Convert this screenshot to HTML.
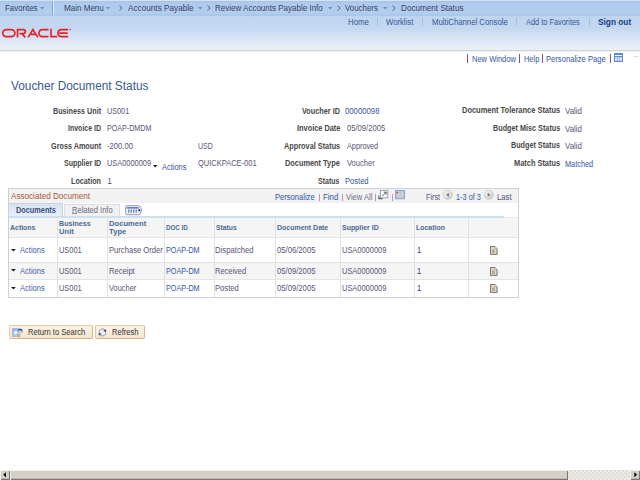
<!DOCTYPE html>
<html><head><meta charset="utf-8"><style>
html,body{margin:0;padding:0;width:640px;height:480px;overflow:hidden;background:#fff}
.t{position:absolute;white-space:nowrap;font-family:"Liberation Sans",sans-serif}
.r{position:absolute;display:block}
</style></head><body>
<div class="r" style="left:0px;top:0px;width:640px;height:16px;background:linear-gradient(#d3e2f4 0,#d3e2f4 1px,#a6c2e7 1px,#afcaec 3px,#b3cdee 13px,#abc7eb 15px,#abc7eb 16px)"></div>
<div class="r" style="left:0px;top:16px;width:640px;height:34px;background:linear-gradient(#bfd5ee 0%,#c4d8f0 38%,#cfdff2 52%,#dae6f5 70%,#e3ecf7 85%,#ebf1f9 100%)"></div>
<div class="r" style="left:0px;top:50px;width:640px;height:1px;background:#d2d6dc"></div>
<div class="r" style="left:0px;top:51px;width:640px;height:1px;background:#f0f1f3"></div>
<div class="r" style="left:52px;top:1px;width:1px;height:14px;background:#80a4d4"></div>
<div class="r" style="left:53px;top:1px;width:1px;height:14px;background:#e6f0fb"></div>
<svg class="r" style="left:39.75px;top:7.2px" width="5.5" height="3.6"><path d="M0 0H4.5L2.25 2.6Z" fill="#7090c0"/></svg>
<svg class="r" style="left:105.6px;top:7.2px" width="5.5" height="3.6"><path d="M0 0H4.5L2.25 2.6Z" fill="#7090c0"/></svg>
<svg class="r" style="left:197.6px;top:7.2px" width="5.5" height="3.6"><path d="M0 0H4.5L2.25 2.6Z" fill="#7090c0"/></svg>
<svg class="r" style="left:327.75px;top:7.2px" width="5.5" height="3.6"><path d="M0 0H4.5L2.25 2.6Z" fill="#7090c0"/></svg>
<svg class="r" style="left:383.4px;top:7.2px" width="5.5" height="3.6"><path d="M0 0H4.5L2.25 2.6Z" fill="#7090c0"/></svg>
<svg class="r" style="left:118.5px;top:5.4px" width="5" height="7"><path d="M0.6 0.6L3 3.1L0.6 5.6" stroke="#45587a" fill="none" stroke-width="0.95"/></svg>
<svg class="r" style="left:206.8px;top:5.4px" width="5" height="7"><path d="M0.6 0.6L3 3.1L0.6 5.6" stroke="#45587a" fill="none" stroke-width="0.95"/></svg>
<svg class="r" style="left:336.8px;top:5.4px" width="5" height="7"><path d="M0.6 0.6L3 3.1L0.6 5.6" stroke="#45587a" fill="none" stroke-width="0.95"/></svg>
<svg class="r" style="left:392px;top:5.4px" width="5" height="7"><path d="M0.6 0.6L3 3.1L0.6 5.6" stroke="#45587a" fill="none" stroke-width="0.95"/></svg>
<div class="r" style="left:377px;top:18px;width:1px;height:8px;background:#a9bedb"></div>
<div class="r" style="left:422px;top:18px;width:1px;height:8px;background:#a9bedb"></div>
<div class="r" style="left:516px;top:18px;width:1px;height:8px;background:#a9bedb"></div>
<div class="r" style="left:589px;top:18px;width:1px;height:8px;background:#a9bedb"></div>
<svg class="r" style="left:0;top:26px" width="76" height="14" viewBox="0 26 76 14"><g fill="none" stroke="#e8202a" stroke-width="1.7">
<rect x="2.75" y="29.65" width="12.1" height="6.9" rx="3.45"/>
<path d="M17.55 37.4V29.65H23.4A1.95 1.95 0 0 1 23.4 33.55H19.5M21.9 33.6L25.2 37.4"/>
<path d="M28.1 37.4L32.9 29.5L37.9 37.4M30.9 34.3H36.2"/>
<path d="M48.6 29.65H42.35A3.45 3.45 0 0 0 42.35 36.55H48.6"/>
<path d="M51.05 28.8V36.55H57.1"/>
<path d="M68.1 29.65H61.35A3.45 3.45 0 0 0 61.35 36.55H68.1M59.2 33.05H67.7"/>
</g><circle cx="70.3" cy="29.5" r="0.7" fill="#e8202a"/></svg>
<div class="r" style="left:467px;top:54px;width:1px;height:9px;background:#8a4aa8"></div>
<div class="r" style="left:519px;top:54px;width:1px;height:9px;background:#8a4aa8"></div>
<div class="r" style="left:542px;top:54px;width:1px;height:9px;background:#8a4aa8"></div>
<div class="r" style="left:610px;top:54px;width:1px;height:9px;background:#8a4aa8"></div>
<svg class="r" style="left:614px;top:53px" width="9" height="9"><rect x="0" y="0" width="9" height="9" fill="#5d8ccf"/><rect x="1" y="2" width="7" height="1" fill="#f4f8ff"/><rect x="1" y="4" width="7" height="4" fill="#c9dbf3"/><path d="M1 6H8" stroke="#e8f0fb" stroke-width="0.8"/><path d="M3.5 4V8M5.5 4V8" stroke="#8eb0e2" stroke-width="0.8"/></svg>
<div class="r" style="left:634px;top:56px;width:5px;height:1px;background:#e2e2e2"></div>
<div class="r" style="left:634px;top:57px;width:1px;height:1px;background:#ececec"></div>
<div class="r" style="left:8px;top:188px;width:511px;height:110px;background:#fff;border:1px solid #cbd0d9;box-sizing:border-box"></div>
<div class="r" style="left:9px;top:189px;width:509px;height:14px;background:#f2f2f2"></div>
<div class="r" style="left:319px;top:194px;width:1px;height:7px;background:#cc90a8"></div>
<div class="r" style="left:342px;top:194px;width:1px;height:7px;background:#cc90a8"></div>
<div class="r" style="left:375px;top:194px;width:1px;height:7px;background:#cc90a8"></div>
<div class="r" style="left:392px;top:194px;width:1px;height:7px;background:#cc90a8"></div>
<svg class="r" style="left:378px;top:190px" width="11" height="10"><path d="M0.9 5.6V8.6H4.6" fill="none" stroke="#5a5a5a" stroke-width="1.1"/><rect x="2.4" y="0.6" width="7.4" height="7.2" fill="#fff" stroke="#8c9cb6" stroke-width="0.9"/><path d="M4.4 6L7.9 2.4M5.7 2.2H8.1V4.6" stroke="#505050" stroke-width="0.9" fill="none"/></svg>
<svg class="r" style="left:395.2px;top:190px" width="10" height="9.5"><rect x="0.5" y="0.5" width="9" height="8.3" fill="#c3c7cc" stroke="#78a0d6" stroke-width="0.9"/><path d="M1 4.6H9M4 1V8.5M6.8 1V8.5" stroke="#d2d6da" stroke-width="0.6"/><circle cx="2.2" cy="2.5" r="0.8" fill="#f01818"/></svg>
<svg class="r" style="left:443.3px;top:189.6px" width="10" height="10"><defs><linearGradient id="g443" x1="0" y1="0" x2="1" y2="1"><stop offset="0" stop-color="#ffffff"/><stop offset="1" stop-color="#c4c4c4"/></linearGradient></defs><circle cx="4.8" cy="4.8" r="4.5" fill="url(#g443)" stroke="#bdbdbd" stroke-width="0.7"/><path d="M5.9 2.7L3.2 4.8L5.9 6.9Z" fill="#7a7a7a"/></svg>
<svg class="r" style="left:484.2px;top:189.6px" width="10" height="10"><defs><linearGradient id="g484" x1="0" y1="0" x2="1" y2="1"><stop offset="0" stop-color="#ffffff"/><stop offset="1" stop-color="#c4c4c4"/></linearGradient></defs><circle cx="4.8" cy="4.8" r="4.5" fill="url(#g484)" stroke="#bdbdbd" stroke-width="0.7"/><path d="M3.7 2.7L6.4 4.8L3.7 6.9Z" fill="#7a7a7a"/></svg>
<div class="r" style="left:9px;top:203px;width:509px;height:13px;background:#fff"></div>
<div class="r" style="left:9px;top:203px;width:54px;height:14px;background:linear-gradient(#d8e3f1,#e9eff8);border-right:1px solid #c8d4e4;border-top:1px solid #c9d3e2;box-sizing:border-box"></div>
<div class="r" style="left:64px;top:204px;width:56px;height:12px;background:#f1f1f1;border:1px solid #d9dde4;border-bottom:none;box-sizing:border-box"></div>
<svg class="r" style="left:125px;top:204.5px" width="18" height="11"><path d="M1.6 0.7H13.6Q15.2 0.7 16.1 3.4L16.7 5.2L16.1 7Q15.2 9.7 13.6 9.7H1.6Q0.7 9.7 0.7 8.8V1.6Q0.7 0.7 1.6 0.7Z" fill="#f0f4fb" stroke="#858da0" stroke-width="0.9"/><rect x="1.8" y="2.1" width="11.8" height="1.5" fill="#5674c0"/><rect x="3.0" y="4.7" width="1.5" height="1" fill="#2f4f9c"/><rect x="5.5" y="4.7" width="1.5" height="1" fill="#2f4f9c"/><rect x="8.0" y="4.7" width="1.5" height="1" fill="#2f4f9c"/><rect x="10.5" y="4.7" width="1.5" height="1" fill="#2f4f9c"/><rect x="3.0" y="6.5" width="1.5" height="1" fill="#2f4f9c"/><rect x="5.5" y="6.5" width="1.5" height="1" fill="#2f4f9c"/><rect x="8.0" y="6.5" width="1.5" height="1" fill="#2f4f9c"/><rect x="10.5" y="6.5" width="1.5" height="1" fill="#2f4f9c"/><path d="M13.5 3.5L15.9 5.25L13.5 7Z" fill="#1c3a88"/></svg>
<div class="r" style="left:9px;top:216px;width:495px;height:2px;background:#cde0ef"></div>
<div class="r" style="left:504px;top:217px;width:14px;height:1px;background:#e6e6e6"></div>
<div class="r" style="left:9px;top:218px;width:509px;height:19px;background:#f5f5f5"></div>
<div class="r" style="left:9px;top:237px;width:509px;height:1px;background:#e6e6e6"></div>
<div class="r" style="left:57px;top:218px;width:1px;height:79px;background:#e2e2e2"></div>
<div class="r" style="left:107px;top:218px;width:1px;height:79px;background:#e2e2e2"></div>
<div class="r" style="left:164px;top:218px;width:1px;height:79px;background:#e2e2e2"></div>
<div class="r" style="left:214px;top:218px;width:1px;height:79px;background:#e2e2e2"></div>
<div class="r" style="left:275px;top:218px;width:1px;height:79px;background:#e2e2e2"></div>
<div class="r" style="left:340px;top:218px;width:1px;height:79px;background:#e2e2e2"></div>
<div class="r" style="left:414px;top:218px;width:1px;height:79px;background:#e2e2e2"></div>
<div class="r" style="left:468px;top:218px;width:1px;height:79px;background:#e2e2e2"></div>
<div class="r" style="left:9px;top:262px;width:509px;height:1px;background:#e4e4e4"></div>
<div class="r" style="left:9px;top:263px;width:509px;height:16px;background:#f5f5f5"></div>
<div class="r" style="left:9px;top:279px;width:509px;height:1px;background:#e4e4e4"></div>
<div class="r" style="left:57px;top:263px;width:1px;height:16px;background:#e0e0e0"></div>
<div class="r" style="left:107px;top:263px;width:1px;height:16px;background:#e0e0e0"></div>
<div class="r" style="left:164px;top:263px;width:1px;height:16px;background:#e0e0e0"></div>
<div class="r" style="left:214px;top:263px;width:1px;height:16px;background:#e0e0e0"></div>
<div class="r" style="left:275px;top:263px;width:1px;height:16px;background:#e0e0e0"></div>
<div class="r" style="left:340px;top:263px;width:1px;height:16px;background:#e0e0e0"></div>
<div class="r" style="left:414px;top:263px;width:1px;height:16px;background:#e0e0e0"></div>
<div class="r" style="left:468px;top:263px;width:1px;height:16px;background:#e0e0e0"></div>
<svg class="r" style="left:489.6px;top:245.8px" width="9" height="10"><path d="M0.5 0.5H4.9L7.1 2.7V8.4H0.5Z" fill="#e4dac2" stroke="#6c665a" stroke-width="0.9"/><path d="M4.9 0.6V2.7H7" fill="#faf6ec" stroke="#8c867a" stroke-width="0.6"/><rect x="2.1" y="3.4" width="2.7" height="3.6" fill="#a29e9e" opacity="0.85"/></svg>
<svg class="r" style="left:489.6px;top:266.6px" width="9" height="10"><path d="M0.5 0.5H4.9L7.1 2.7V8.4H0.5Z" fill="#e4dac2" stroke="#6c665a" stroke-width="0.9"/><path d="M4.9 0.6V2.7H7" fill="#faf6ec" stroke="#8c867a" stroke-width="0.6"/><rect x="2.1" y="3.4" width="2.7" height="3.6" fill="#a29e9e" opacity="0.85"/></svg>
<svg class="r" style="left:489.6px;top:283.6px" width="9" height="10"><path d="M0.5 0.5H4.9L7.1 2.7V8.4H0.5Z" fill="#e4dac2" stroke="#6c665a" stroke-width="0.9"/><path d="M4.9 0.6V2.7H7" fill="#faf6ec" stroke="#8c867a" stroke-width="0.6"/><rect x="2.1" y="3.4" width="2.7" height="3.6" fill="#a29e9e" opacity="0.85"/></svg>
<svg class="r" style="left:11.3px;top:248.6px" width="6" height="3"><path d="M0 0H4.8L2.4 2.6Z" fill="#1a1a1a"/></svg>
<svg class="r" style="left:11.3px;top:269px" width="6" height="3"><path d="M0 0H4.8L2.4 2.6Z" fill="#1a1a1a"/></svg>
<svg class="r" style="left:11.3px;top:287px" width="6" height="3"><path d="M0 0H4.8L2.4 2.6Z" fill="#1a1a1a"/></svg>
<svg class="r" style="left:153.2px;top:165px" width="5" height="3"><path d="M0 0H4.4L2.2 2.5Z" fill="#1a1a1a"/></svg>
<div class="r" style="left:9px;top:325px;width:84px;height:14px;background:linear-gradient(#fcf3e6,#f6e4cc);border:1px solid #e6c89e;border-right-color:#d9b583;border-bottom-color:#d9b583;box-sizing:border-box;border-radius:2px"></div>
<div class="r" style="left:95px;top:325px;width:50px;height:14px;background:linear-gradient(#fcf3e6,#f6e4cc);border:1px solid #e6c89e;border-right-color:#d9b583;border-bottom-color:#d9b583;box-sizing:border-box;border-radius:2px"></div>
<svg class="r" style="left:12px;top:327.5px" width="12" height="10"><defs><linearGradient id="rs" x1="0" y1="0" x2="1" y2="1"><stop offset="0" stop-color="#7fb0f0"/><stop offset="1" stop-color="#cfe2fb"/></linearGradient></defs><rect x="0.4" y="0.6" width="7.6" height="8" fill="url(#rs)" stroke="#8ab4ee" stroke-width="0.7"/><circle cx="3.9" cy="4.6" r="2.2" fill="#f4f8ff" stroke="#9cb4d8" stroke-width="0.8"/><path d="M5.4 6.3L7.4 8.6" stroke="#cfa418" stroke-width="1.3"/><path d="M5.8 2.6Q7.4 0.9 9.6 1.9" stroke="#1f3f8c" stroke-width="1.1" fill="none"/><path d="M9 0.5L10.8 2.4L8.6 3.1Z" fill="#1f3f8c"/><path d="M10.2 3.2V4.6" stroke="#2a4a98" stroke-width="0.8"/></svg>
<svg class="r" style="left:98px;top:328px" width="9" height="9"><path d="M0.9 4.2A3.5 3.5 0 0 1 6.6 1.6" stroke="#7d9ed6" stroke-width="1" fill="none"/><path d="M7.9 4.4A3.5 3.5 0 0 1 2.2 7.2" stroke="#7d9ed6" stroke-width="1" fill="none"/><path d="M5.2 2.6L8.1 1.2L7.9 4.3Z" fill="#1a3c9e"/><path d="M3.6 6.1L0.7 7.6L0.9 4.6Z" fill="#1a3c9e"/></svg>
<div class="r" style="left:71.5px;top:213px;width:5px;height:1px;background:#9090a8"></div>
<div class="r" style="left:0px;top:470px;width:640px;height:10px;background-color:#eeece8;background-image:linear-gradient(45deg,#e0ddd9 25%,transparent 25%,transparent 75%,#e0ddd9 75%),linear-gradient(45deg,#e0ddd9 25%,transparent 25%,transparent 75%,#e0ddd9 75%);background-size:4px 4px;background-position:0 0,2px 2px"></div>
<div class="r" style="left:0px;top:470px;width:10px;height:10px;background:#d4d0c8;box-shadow:inset 1px 1px 0 #f2eeea,inset -1px -1px 0 #7a7674,inset -1px -2px 0 #bcb8b2"></div>
<div class="r" style="left:10px;top:470px;width:558px;height:10px;background:#d4d0c8;box-shadow:inset 1px 1px 0 #f2eeea,inset -1px -1px 0 #7a7674,inset -1px -2px 0 #bcb8b2"></div>
<div class="r" style="left:630px;top:470px;width:10px;height:10px;background:#d4d0c8;box-shadow:inset 1px 1px 0 #f2eeea,inset -1px -1px 0 #7a7674,inset -1px -2px 0 #bcb8b2"></div>
<svg class="r" style="left:3px;top:472px" width="4" height="6"><path d="M3 0.3V5.2L0.2 2.75Z" fill="#000"/></svg>
<svg class="r" style="left:634px;top:472px" width="4" height="6"><path d="M0.3 0.3V5.2L3.1 2.75Z" fill="#000"/></svg>
<div class="t" style="left:5.00px;top:4px;font-size:8.4px;line-height:8.4px;font-weight:normal;color:#37446a;transform:scaleX(0.9441);transform-origin:0 0;">Favorites</div>
<div class="t" style="left:63.75px;top:4px;font-size:8.4px;line-height:8.4px;font-weight:normal;color:#37446a;transform:scaleX(0.9610);transform-origin:0 0;">Main Menu</div>
<div class="t" style="left:127.50px;top:4px;font-size:8.4px;line-height:8.4px;font-weight:normal;color:#37446a;transform:scaleX(0.9791);transform-origin:0 0;">Accounts Payable</div>
<div class="t" style="left:215.00px;top:4px;font-size:8.4px;line-height:8.4px;font-weight:normal;color:#37446a;transform:scaleX(0.9566);transform-origin:0 0;">Review Accounts Payable Info</div>
<div class="t" style="left:345.25px;top:4px;font-size:8.4px;line-height:8.4px;font-weight:normal;color:#37446a;transform:scaleX(0.9400);transform-origin:0 0;">Vouchers</div>
<div class="t" style="left:400.75px;top:4px;font-size:8.4px;line-height:8.4px;font-weight:normal;color:#37446a;transform:scaleX(0.9727);transform-origin:0 0;">Document Status</div>
<div class="t" style="left:347.80px;top:18px;font-size:8.4px;line-height:8.4px;font-weight:normal;color:#3456a0;transform:scaleX(0.9364);transform-origin:0 0;">Home</div>
<div class="t" style="left:386.10px;top:18px;font-size:8.4px;line-height:8.4px;font-weight:normal;color:#3456a0;transform:scaleX(0.9217);transform-origin:0 0;">Worklist</div>
<div class="t" style="left:431.85px;top:18px;font-size:8.4px;line-height:8.4px;font-weight:normal;color:#3456a0;transform:scaleX(0.9244);transform-origin:0 0;">MultiChannel Console</div>
<div class="t" style="left:525.70px;top:18px;font-size:8.4px;line-height:8.4px;font-weight:normal;color:#3456a0;transform:scaleX(0.8820);transform-origin:0 0;">Add to Favorites</div>
<div class="t" style="left:597.60px;top:18px;font-size:8.6px;line-height:8.6px;font-weight:bold;color:#173a86;transform:scaleX(0.9657);transform-origin:0 0;">Sign out</div>
<div class="t" style="left:471.90px;top:55px;font-size:8.4px;line-height:8.4px;font-weight:normal;color:#3456a0;transform:scaleX(0.8980);transform-origin:0 0;">New Window</div>
<div class="t" style="left:523.50px;top:55px;font-size:8.4px;line-height:8.4px;font-weight:normal;color:#3456a0;transform:scaleX(0.8882);transform-origin:0 0;">Help</div>
<div class="t" style="left:546.10px;top:55px;font-size:8.4px;line-height:8.4px;font-weight:normal;color:#3456a0;transform:scaleX(0.9106);transform-origin:0 0;">Personalize Page</div>
<div class="t" style="left:11.00px;top:80px;font-size:12px;line-height:12px;font-weight:normal;color:#3a5a8c;transform:scaleX(0.9856);transform-origin:0 0;">Voucher Document Status</div>
<div class="t" style="left:52.80px;top:107px;font-size:8.4px;line-height:8.4px;font-weight:bold;color:#484848;transform:scaleX(0.8607);transform-origin:0 0;">Business Unit</div>
<div class="t" style="left:67.60px;top:124px;font-size:8.4px;line-height:8.4px;font-weight:bold;color:#484848;transform:scaleX(0.8350);transform-origin:0 0;">Invoice ID</div>
<div class="t" style="left:50.80px;top:142px;font-size:8.4px;line-height:8.4px;font-weight:bold;color:#484848;transform:scaleX(0.8655);transform-origin:0 0;">Gross Amount</div>
<div class="t" style="left:64.00px;top:159px;font-size:8.4px;line-height:8.4px;font-weight:bold;color:#484848;transform:scaleX(0.8409);transform-origin:0 0;">Supplier ID</div>
<div class="t" style="left:71.00px;top:177px;font-size:8.4px;line-height:8.4px;font-weight:bold;color:#484848;transform:scaleX(0.8571);transform-origin:0 0;">Location</div>
<div class="t" style="left:107.00px;top:107px;font-size:8.4px;line-height:8.4px;font-weight:normal;color:#5a5474;transform:scaleX(0.8654);transform-origin:0 0;">US001</div>
<div class="t" style="left:107.00px;top:124px;font-size:8.4px;line-height:8.4px;font-weight:normal;color:#5a5474;transform:scaleX(0.8510);transform-origin:0 0;">POAP-DMDM</div>
<div class="t" style="left:107.00px;top:142px;font-size:8.4px;line-height:8.4px;font-weight:normal;color:#5a5474;transform:scaleX(0.9107);transform-origin:0 0;">-200.00</div>
<div class="t" style="left:107.00px;top:159px;font-size:8.4px;line-height:8.4px;font-weight:normal;color:#5a5474;transform:scaleX(0.8850);transform-origin:0 0;">USA0000009</div>
<div class="t" style="left:107.20px;top:177px;font-size:8.4px;line-height:8.4px;font-weight:normal;color:#5a5474;">1</div>
<div class="t" style="left:198.10px;top:142px;font-size:8.4px;line-height:8.4px;font-weight:normal;color:#5a5474;transform:scaleX(0.8333);transform-origin:0 0;">USD</div>
<div class="t" style="left:198.10px;top:159px;font-size:8.4px;line-height:8.4px;font-weight:normal;color:#5a5474;transform:scaleX(0.8946);transform-origin:0 0;">QUICKPACE-001</div>
<div class="t" style="left:161.75px;top:163px;font-size:8.4px;line-height:8.4px;font-weight:normal;color:#3554a2;transform:scaleX(0.8889);transform-origin:0 0;">Actions</div>
<div class="t" style="left:301.50px;top:107px;font-size:8.4px;line-height:8.4px;font-weight:bold;color:#484848;transform:scaleX(0.8705);transform-origin:0 0;">Voucher ID</div>
<div class="t" style="left:296.70px;top:124px;font-size:8.4px;line-height:8.4px;font-weight:bold;color:#484848;transform:scaleX(0.8796);transform-origin:0 0;">Invoice Date</div>
<div class="t" style="left:283.80px;top:142px;font-size:8.4px;line-height:8.4px;font-weight:bold;color:#484848;transform:scaleX(0.8750);transform-origin:0 0;">Approval Status</div>
<div class="t" style="left:285.20px;top:159px;font-size:8.4px;line-height:8.4px;font-weight:bold;color:#484848;transform:scaleX(0.8806);transform-origin:0 0;">Document Type</div>
<div class="t" style="left:318.00px;top:177px;font-size:8.4px;line-height:8.4px;font-weight:bold;color:#484848;transform:scaleX(0.8385);transform-origin:0 0;">Status</div>
<div class="t" style="left:345.00px;top:107px;font-size:8.4px;line-height:8.4px;font-weight:normal;color:#3554a2;transform:scaleX(0.9243);transform-origin:0 0;">00000098</div>
<div class="t" style="left:347.00px;top:124px;font-size:8.4px;line-height:8.4px;font-weight:normal;color:#5a5474;transform:scaleX(0.9095);transform-origin:0 0;">05/09/2005</div>
<div class="t" style="left:347.00px;top:142px;font-size:8.4px;line-height:8.4px;font-weight:normal;color:#5a5474;transform:scaleX(0.8694);transform-origin:0 0;">Approved</div>
<div class="t" style="left:347.00px;top:159px;font-size:8.4px;line-height:8.4px;font-weight:normal;color:#5a5474;transform:scaleX(0.9000);transform-origin:0 0;">Voucher</div>
<div class="t" style="left:345.00px;top:177px;font-size:8.4px;line-height:8.4px;font-weight:normal;color:#3554a2;transform:scaleX(0.9038);transform-origin:0 0;">Posted</div>
<div class="t" style="left:461.90px;top:106px;font-size:8.4px;line-height:8.4px;font-weight:bold;color:#484848;transform:scaleX(0.8918);transform-origin:0 0;">Document Tolerance Status</div>
<div class="t" style="left:492.50px;top:124px;font-size:8.4px;line-height:8.4px;font-weight:bold;color:#484848;transform:scaleX(0.8654);transform-origin:0 0;">Budget Misc Status</div>
<div class="t" style="left:510.90px;top:141px;font-size:8.4px;line-height:8.4px;font-weight:bold;color:#484848;transform:scaleX(0.8614);transform-origin:0 0;">Budget Status</div>
<div class="t" style="left:514.00px;top:159px;font-size:8.4px;line-height:8.4px;font-weight:bold;color:#484848;transform:scaleX(0.8846);transform-origin:0 0;">Match Status</div>
<div class="t" style="left:565.00px;top:107px;font-size:8.4px;line-height:8.4px;font-weight:normal;color:#5a5474;transform:scaleX(0.9444);transform-origin:0 0;">Valid</div>
<div class="t" style="left:565.00px;top:125px;font-size:8.4px;line-height:8.4px;font-weight:normal;color:#5a5474;transform:scaleX(0.9444);transform-origin:0 0;">Valid</div>
<div class="t" style="left:565.00px;top:142px;font-size:8.4px;line-height:8.4px;font-weight:normal;color:#5a5474;transform:scaleX(0.9444);transform-origin:0 0;">Valid</div>
<div class="t" style="left:565.30px;top:160px;font-size:8.4px;line-height:8.4px;font-weight:normal;color:#3554a2;transform:scaleX(0.8750);transform-origin:0 0;">Matched</div>
<div class="t" style="left:10.75px;top:192px;font-size:8.4px;line-height:8.4px;font-weight:normal;color:#a35a3a;transform:scaleX(0.9695);transform-origin:0 0;">Associated Document</div>
<div class="t" style="left:274.75px;top:193px;font-size:8.4px;line-height:8.4px;font-weight:normal;color:#3456a0;transform:scaleX(0.9057);transform-origin:0 0;">Personalize</div>
<div class="t" style="left:323.10px;top:193px;font-size:8.4px;line-height:8.4px;font-weight:normal;color:#3456a0;transform:scaleX(0.9375);transform-origin:0 0;">Find</div>
<div class="t" style="left:345.60px;top:193px;font-size:8.4px;line-height:8.4px;font-weight:normal;color:#6e6e86;transform:scaleX(0.9069);transform-origin:0 0;">View All</div>
<div class="t" style="left:425.90px;top:193px;font-size:8.4px;line-height:8.4px;font-weight:normal;color:#5a5276;transform:scaleX(0.8647);transform-origin:0 0;">First</div>
<div class="t" style="left:456.40px;top:193px;font-size:8.4px;line-height:8.4px;font-weight:normal;color:#3a5aa8;transform:scaleX(0.8750);transform-origin:0 0;">1-3 of 3</div>
<div class="t" style="left:496.60px;top:193px;font-size:8.4px;line-height:8.4px;font-weight:normal;color:#5a5276;transform:scaleX(0.9250);transform-origin:0 0;">Last</div>
<div class="t" style="left:16.00px;top:206px;font-size:8.4px;line-height:8.4px;font-weight:bold;color:#3a5283;transform:scaleX(0.8739);transform-origin:0 0;">Documents</div>
<div class="t" style="left:71.60px;top:206px;font-size:8.4px;line-height:8.4px;font-weight:normal;color:#6a6a80;transform:scaleX(0.9000);transform-origin:0 0;">Related Info</div>
<div class="t" style="left:10.20px;top:224px;font-size:7.6px;line-height:7.6px;font-weight:bold;color:#4b6994;transform:scaleX(0.9143);transform-origin:0 0;">Actions</div>
<div class="t" style="left:59.10px;top:220px;font-size:7.6px;line-height:7.6px;font-weight:bold;color:#4b6994;transform:scaleX(0.9382);transform-origin:0 0;">Business</div>
<div class="t" style="left:59.10px;top:228px;font-size:7.6px;line-height:7.6px;font-weight:bold;color:#4b6994;">Unit</div>
<div class="t" style="left:109.10px;top:220px;font-size:7.6px;line-height:7.6px;font-weight:bold;color:#4b6994;">Document</div>
<div class="t" style="left:109.10px;top:228px;font-size:7.6px;line-height:7.6px;font-weight:bold;color:#4b6994;">Type</div>
<div class="t" style="left:165.90px;top:224px;font-size:7.6px;line-height:7.6px;font-weight:bold;color:#4b6994;transform:scaleX(0.8222);transform-origin:0 0;">DOC ID</div>
<div class="t" style="left:215.80px;top:224px;font-size:7.6px;line-height:7.6px;font-weight:bold;color:#4b6994;transform:scaleX(0.8913);transform-origin:0 0;">Status</div>
<div class="t" style="left:277.00px;top:224px;font-size:7.6px;line-height:7.6px;font-weight:bold;color:#4b6994;transform:scaleX(0.9196);transform-origin:0 0;">Document Date</div>
<div class="t" style="left:341.70px;top:224px;font-size:7.6px;line-height:7.6px;font-weight:bold;color:#4b6994;transform:scaleX(0.9150);transform-origin:0 0;">Supplier ID</div>
<div class="t" style="left:415.70px;top:224px;font-size:7.6px;line-height:7.6px;font-weight:bold;color:#4b6994;transform:scaleX(0.9125);transform-origin:0 0;">Location</div>
<div class="t" style="left:19.70px;top:246px;font-size:8.4px;line-height:8.4px;font-weight:normal;color:#45609c;transform:scaleX(0.9000);transform-origin:0 0;">Actions</div>
<div class="t" style="left:58.90px;top:246px;font-size:8.4px;line-height:8.4px;font-weight:normal;color:#5a5474;transform:scaleX(0.8885);transform-origin:0 0;">US001</div>
<div class="t" style="left:109.00px;top:246px;font-size:8.4px;line-height:8.4px;font-weight:normal;color:#5a5474;transform:scaleX(0.9110);transform-origin:0 0;">Purchase Order</div>
<div class="t" style="left:166.00px;top:246px;font-size:8.4px;line-height:8.4px;font-weight:normal;color:#3554a2;transform:scaleX(0.8590);transform-origin:0 0;">POAP-DM</div>
<div class="t" style="left:215.25px;top:246px;font-size:8.4px;line-height:8.4px;font-weight:normal;color:#5a5474;transform:scaleX(0.9226);transform-origin:0 0;">Dispatched</div>
<div class="t" style="left:277.00px;top:246px;font-size:8.4px;line-height:8.4px;font-weight:normal;color:#5a5474;transform:scaleX(0.9167);transform-origin:0 0;">05/06/2005</div>
<div class="t" style="left:342.00px;top:246px;font-size:8.4px;line-height:8.4px;font-weight:normal;color:#5a5474;transform:scaleX(0.8900);transform-origin:0 0;">USA0000009</div>
<div class="t" style="left:416.70px;top:246px;font-size:8.4px;line-height:8.4px;font-weight:normal;color:#553a80;">1</div>
<div class="t" style="left:19.70px;top:267px;font-size:8.4px;line-height:8.4px;font-weight:normal;color:#45609c;transform:scaleX(0.9000);transform-origin:0 0;">Actions</div>
<div class="t" style="left:58.90px;top:267px;font-size:8.4px;line-height:8.4px;font-weight:normal;color:#5a5474;transform:scaleX(0.8885);transform-origin:0 0;">US001</div>
<div class="t" style="left:109.00px;top:267px;font-size:8.4px;line-height:8.4px;font-weight:normal;color:#5a5474;transform:scaleX(0.9052);transform-origin:0 0;">Receipt</div>
<div class="t" style="left:166.00px;top:267px;font-size:8.4px;line-height:8.4px;font-weight:normal;color:#3554a2;transform:scaleX(0.8590);transform-origin:0 0;">POAP-DM</div>
<div class="t" style="left:215.25px;top:267px;font-size:8.4px;line-height:8.4px;font-weight:normal;color:#5a5474;transform:scaleX(0.8929);transform-origin:0 0;">Received</div>
<div class="t" style="left:277.00px;top:267px;font-size:8.4px;line-height:8.4px;font-weight:normal;color:#5a5474;transform:scaleX(0.9167);transform-origin:0 0;">05/09/2005</div>
<div class="t" style="left:342.00px;top:267px;font-size:8.4px;line-height:8.4px;font-weight:normal;color:#5a5474;transform:scaleX(0.8900);transform-origin:0 0;">USA0000009</div>
<div class="t" style="left:416.70px;top:267px;font-size:8.4px;line-height:8.4px;font-weight:normal;color:#553a80;">1</div>
<div class="t" style="left:19.70px;top:284px;font-size:8.4px;line-height:8.4px;font-weight:normal;color:#45609c;transform:scaleX(0.9000);transform-origin:0 0;">Actions</div>
<div class="t" style="left:58.90px;top:284px;font-size:8.4px;line-height:8.4px;font-weight:normal;color:#5a5474;transform:scaleX(0.8885);transform-origin:0 0;">US001</div>
<div class="t" style="left:109.00px;top:284px;font-size:8.4px;line-height:8.4px;font-weight:normal;color:#5a5474;transform:scaleX(0.8871);transform-origin:0 0;">Voucher</div>
<div class="t" style="left:166.00px;top:284px;font-size:8.4px;line-height:8.4px;font-weight:normal;color:#3554a2;transform:scaleX(0.8590);transform-origin:0 0;">POAP-DM</div>
<div class="t" style="left:215.25px;top:284px;font-size:8.4px;line-height:8.4px;font-weight:normal;color:#5a5474;transform:scaleX(0.9135);transform-origin:0 0;">Posted</div>
<div class="t" style="left:277.00px;top:284px;font-size:8.4px;line-height:8.4px;font-weight:normal;color:#5a5474;transform:scaleX(0.9167);transform-origin:0 0;">05/09/2005</div>
<div class="t" style="left:342.00px;top:284px;font-size:8.4px;line-height:8.4px;font-weight:normal;color:#5a5474;transform:scaleX(0.8900);transform-origin:0 0;">USA0000009</div>
<div class="t" style="left:416.70px;top:284px;font-size:8.4px;line-height:8.4px;font-weight:normal;color:#553a80;">1</div>
<div class="t" style="left:28.25px;top:328px;font-size:8.4px;line-height:8.4px;font-weight:normal;color:#333;transform:scaleX(0.9048);transform-origin:0 0;">Return to Search</div>
<div class="t" style="left:111.75px;top:328px;font-size:8.4px;line-height:8.4px;font-weight:normal;color:#333;transform:scaleX(0.9052);transform-origin:0 0;">Refresh</div>
</body></html>
